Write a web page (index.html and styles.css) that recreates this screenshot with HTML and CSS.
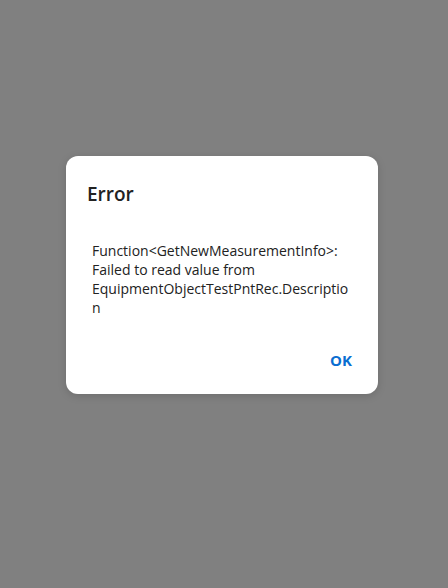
FILE: index.html
```html
<!DOCTYPE html>
<html>
<head>
<meta charset="utf-8">
<link rel="stylesheet" href="styles.css">
</head>
<body>
<div class="overlay">
  <div class="dialog">
    <h1 class="title">Error</h1>
    <p class="message">Function&lt;GetNewMeasurementInfo&gt;: Failed to read value from EquipmentObjectTestPntRec.Description</p>
    <div class="actions"><button class="ok">OK</button></div>
  </div>
</div>
</body>
</html>
```
FILE: styles.css
```css
html, body {
  margin: 0;
  padding: 0;
  height: 100%;
  background: #808080;
  font-family: "Open Sans", "Noto Sans", sans-serif;
}
.overlay {
  padding: 156px 0 0 66px;
}
.dialog {
  width: 312px;
  height: 238px;
  box-sizing: border-box;
  background: #fff;
  border-radius: 12px;
  box-shadow: 0 2px 8px rgba(0,0,0,0.15);
  padding: 24px 26px 0 21px;
  display: flex;
  flex-direction: column;
}
.title {
  margin: 0;
  font-size: 19px;
  font-weight: 600;
  color: #222;
  line-height: 28px;
}
.message {
  margin: 33px 0 0 5px;
  font-size: 14px;
  line-height: 19px;
  color: #222;
  overflow-wrap: anywhere;
}
.actions {
  display: flex;
  justify-content: flex-end;
  margin-top: 33px;
}
.ok {
  background: none;
  border: 0;
  padding: 0;
  font-family: inherit;
  font-size: 15px;
  font-weight: 700;
  color: #0a6ed1;
  line-height: 20px;
}
```
